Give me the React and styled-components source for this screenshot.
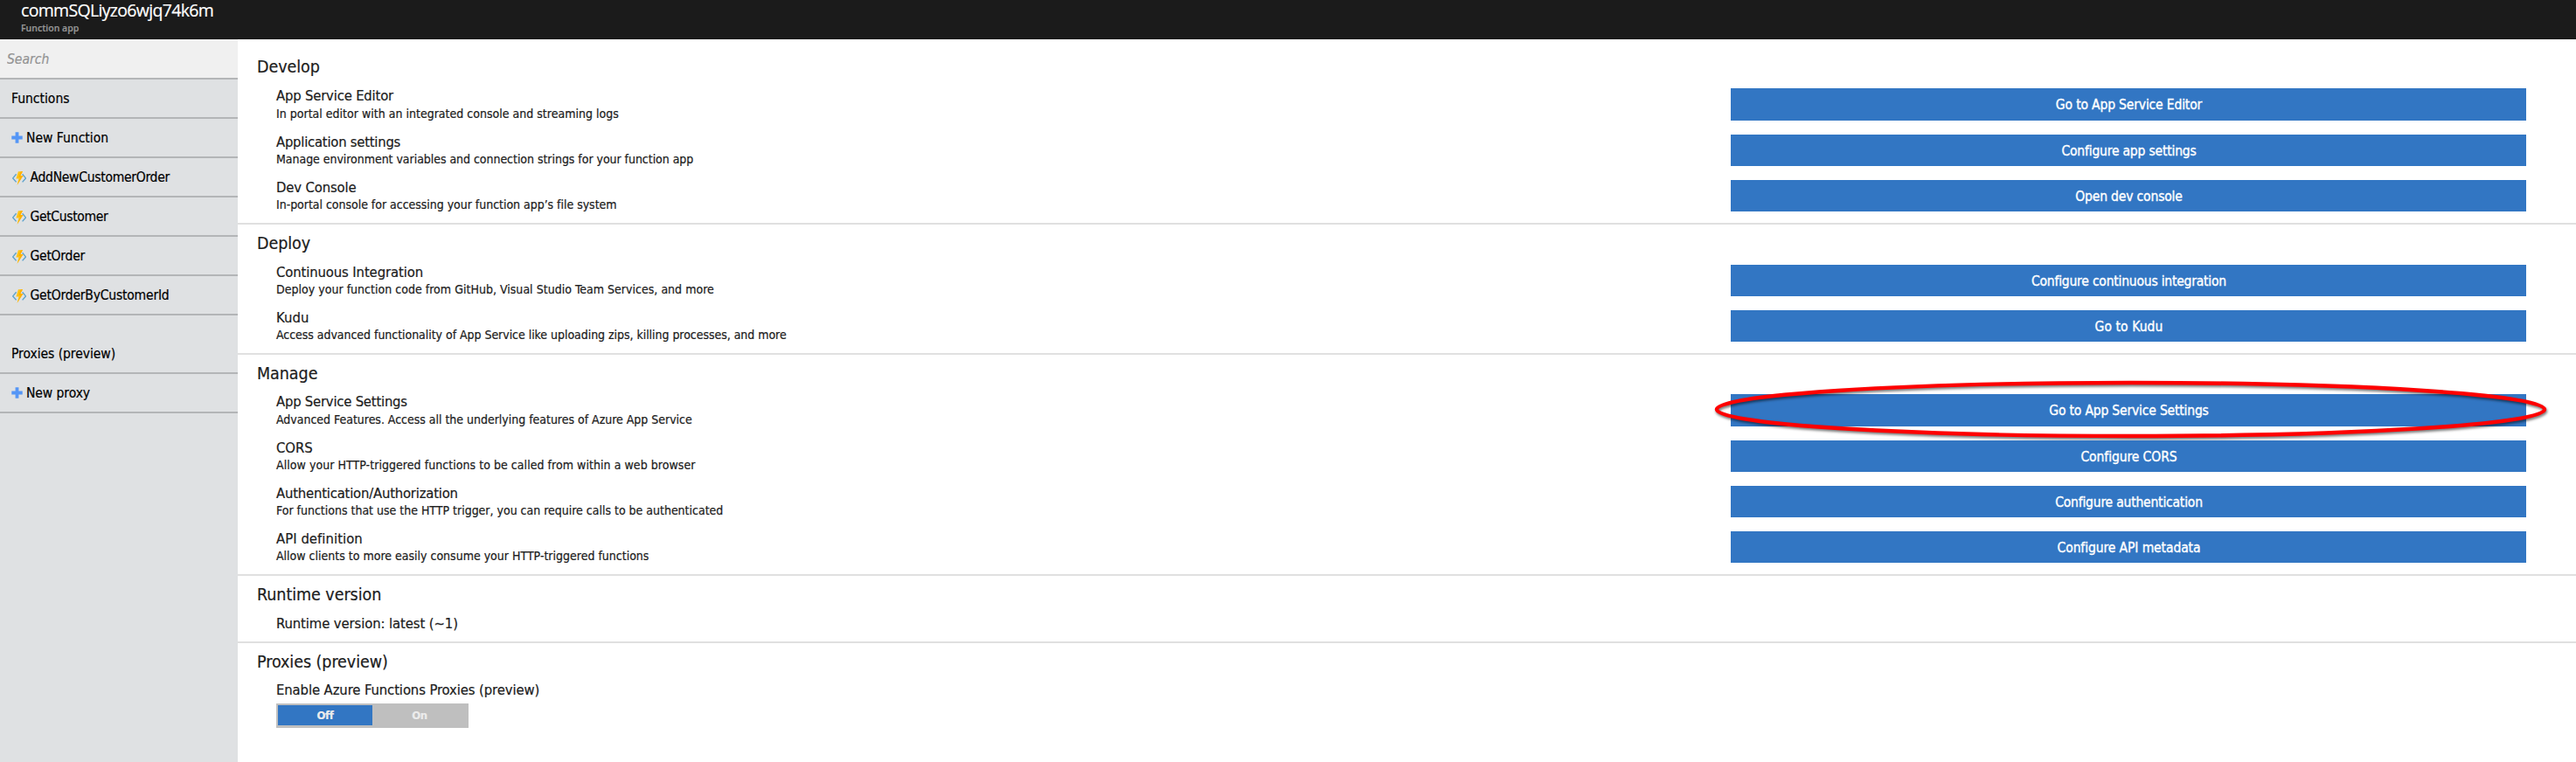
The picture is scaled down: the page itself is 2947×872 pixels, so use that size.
import React from 'react';
import styled, { createGlobalStyle } from 'styled-components';

const GlobalStyle = createGlobalStyle`
  * { box-sizing: border-box; }
  body {
    margin: 0;
    background: #fff;
    color: #202020;
    font-family: "DejaVu Sans Condensed", "DejaVu Sans", Tahoma, Verdana, sans-serif;
    -webkit-text-stroke: 0.2px currentColor;
  }
  button, input { font-family: inherit; border: 0; border-radius: 0; margin: 0; }
`;

const Page = styled.div`
  display: flex;
  flex-direction: column;
  height: 872px;
  overflow: hidden;
`;

const Header = styled.header`
  flex: none;
  height: 45px;
  padding-left: 24px;
  background: #1b1b1b;
  font-family: "Open Sans", "Noto Sans", sans-serif;
`;

const AppName = styled.div`
  font-size: 19.5px;
  line-height: 23px;
  letter-spacing: -0.68px;
  color: #fff;
`;

const AppKind = styled.div`
  margin-top: 2px;
  font-size: 10.5px;
  font-weight: 600;
  line-height: 14px;
  color: #969696;
`;

const Body = styled.div`
  display: flex;
  flex: 1;
  min-height: 0;
`;

const Sidebar = styled.nav`
  flex: none;
  width: 272px;
  background: #dfe1e3;
  font-size: 15.5px;
  line-height: 18px;
  color: #000;
`;

const SearchBox = styled.input`
  display: block;
  width: 100%;
  height: 46px;
  padding: 1px 8px 0;
  border-bottom: 2px solid #b3b5b7;
  background: #f0f0f0;
  font-size: 15.5px;
  outline: 0;
  &::placeholder {
    color: #949494;
    font-style: italic;
    opacity: 1;
    -webkit-text-stroke: 0.2px #949494;
  }
`;

const NavItem = styled.div`
  display: flex;
  align-items: flex-start;
  height: 45px;
  margin-top: ${(p) => (p.$gap ? 22 : 0)}px;
  padding: 13px 12px 0 13px;
  border-bottom: 2px solid #b3b5b7;
  letter-spacing: ${(p) => p.$track || 0}px;
  white-space: nowrap;
`;

const NavIcon = styled.svg`
  flex: none;
  display: block;
  margin: 2px ${(p) => p.$after}px 0 ${(p) => p.$before}px;
`;

const Main = styled.main`
  flex: 1;
  min-width: 0;
  padding-top: 10px;
`;

const Section = styled.section`
  padding: 10px 57px ${(p) => (p.$short ? 12 : 13)}px 22px;
  border-bottom: ${(p) => (p.$last ? 0 : 2)}px solid #e0e0e0;
`;

const SectionTitle = styled.h2`
  height: ${(p) => (p.$tight ? 35 : 36)}px;
  margin: 0;
  font-size: 19.5px;
  font-weight: 400;
  line-height: 23px;
  letter-spacing: -0.05px;
`;

const Rows = styled.div`
  display: flex;
  flex-direction: column;
  gap: 16px;
  padding-left: 22px;
`;

const Row = styled.div`
  display: flex;
  justify-content: space-between;
  height: ${(p) => (p.$tall ? 37 : 36)}px;
`;

const Feature = styled.div`
  display: flex;
  flex-direction: column;
  gap: ${(p) => (p.$tall ? 4 : 3)}px;
`;

const FeatureName = styled.div`
  font-size: 16.5px;
  line-height: 17px;
  letter-spacing: ${(p) => p.$track || 0}px;
  white-space: nowrap;
`;

const FeatureText = styled.div`
  font-size: 14px;
  line-height: 16px;
  letter-spacing: ${(p) => p.$track || 0}px;
  white-space: nowrap;
`;

const ActionCell = styled.div`
  position: relative;
  flex: none;
  width: 910px;
`;

const ActionButton = styled.button`
  display: flex;
  align-items: flex-start;
  justify-content: center;
  width: 100%;
  height: 100%;
  padding: 10px 0 0 1px;
  background: #3276c3;
  color: #fff;
  font-size: 15.5px;
  line-height: 18px;
  letter-spacing: ${(p) => p.$track || 0}px;
  -webkit-text-stroke: 0.35px #fff;
`;

const Marker = styled.svg`
  position: absolute;
  left: -24px;
  top: -21px;
  overflow: visible;
  pointer-events: none;
  filter: drop-shadow(1.5px 2.5px 1.5px rgba(0, 0, 0, 0.55));
`;

const Toggle = styled.div`
  display: flex;
  width: 220px;
  height: 28px;
  margin-top: 7px;
  padding: 2px 2px 3px;
  background: #bfbfbf;
`;

const ToggleOption = styled.button`
  flex: 1;
  padding: 0;
  background: ${(p) => (p.$on ? '#3276c3' : 'transparent')};
  color: #ececec;
  font-size: 13px;
  font-weight: 700;
  line-height: 18px;
  letter-spacing: -0.3px;
`;

const PlusIcon = () => (
  <NavIcon width="13" height="13" viewBox="0 0 13 13" $before={0} $after={4}>
    <path d="M6.5 .3v12.4M.3 6.5h12.4" stroke="#5596f6" strokeWidth="3.8" />
  </NavIcon>
);

const BoltIcon = () => (
  <NavIcon width="16" height="16" viewBox="0 0 16 16" $before={1} $after={4.5}>
    <path d="M4.6 3.2L.7 7.9l3.9 4.5M11.6 3.2l3.9 4.7-3.9 4.5" fill="none" stroke="#5ea3cc" strokeWidth="1.4" />
    <path d="M6.9.2H12L9.3 5h3.2L5.6 15.8 7.4 8.6H4.4z" fill="#fcc419" />
    <path d="M12 .2L9.3 5h3.2L5.6 15.8 9.2 7H7.1L9.6.2z" fill="#ffb000" />
  </NavIcon>
);

const NAV = [
  { label: 'Functions' },
  { label: 'New Function', icon: PlusIcon },
  { label: 'AddNewCustomerOrder', icon: BoltIcon, track: -0.28 },
  { label: 'GetCustomer', icon: BoltIcon, track: -0.34 },
  { label: 'GetOrder', icon: BoltIcon, track: -0.25 },
  { label: 'GetOrderByCustomerId', icon: BoltIcon, track: -0.2 },
  { label: 'Proxies (preview)', gap: true, track: -0.04 },
  { label: 'New proxy', icon: PlusIcon, track: -0.07 },
];

const SECTIONS = [
  {
    title: 'Develop',
    rows: [
      { name: 'App Service Editor', nt: -0.18, text: 'In portal editor with an integrated console and streaming logs', tt: 0.01, action: 'Go to App Service Editor', at: -0.16, tall: true },
      { name: 'Application settings', nt: -0.24, text: 'Manage environment variables and connection strings for your function app', tt: -0.04, action: 'Configure app settings', at: -0.19 },
      { name: 'Dev Console', nt: -0.14, text: 'In-portal console for accessing your function app’s file system', tt: -0.03, action: 'Open dev console', at: -0.16 },
    ],
  },
  {
    title: 'Deploy',
    rows: [
      { name: 'Continuous Integration', nt: -0.11, text: 'Deploy your function code from GitHub, Visual Studio Team Services, and more', tt: 0.02, action: 'Configure continuous integration', at: -0.21 },
      { name: 'Kudu', nt: 0.1, text: 'Access advanced functionality of App Service like uploading zips, killing processes, and more', tt: -0.04, action: 'Go to Kudu', at: 0.07 },
    ],
  },
  {
    title: 'Manage',
    tight: true,
    rows: [
      { name: 'App Service Settings', nt: -0.22, text: 'Advanced Features. Access all the underlying features of Azure App Service', tt: -0.02, action: 'Go to App Service Settings', at: -0.18, tall: true, marked: true },
      { name: 'CORS', nt: 0, text: 'Allow your HTTP-triggered functions to be called from within a web browser', tt: 0.05, action: 'Configure CORS', at: -0.08 },
      { name: 'Authentication/Authorization', nt: -0.2, text: 'For functions that use the HTTP trigger, you can require calls to be authenticated', tt: -0.01, action: 'Configure authentication', at: -0.2 },
      { name: 'API definition', nt: 0.05, text: 'Allow clients to more easily consume your HTTP-triggered functions', tt: 0, action: 'Configure API metadata', at: -0.1 },
    ],
  },
];

const FeatureRow = ({ row }) => (
  <Row $tall={row.tall}>
    <Feature $tall={row.tall}>
      <FeatureName $track={row.nt}>{row.name}</FeatureName>
      <FeatureText $track={row.tt}>{row.text}</FeatureText>
    </Feature>
    <ActionCell>
      <ActionButton $track={row.at}>{row.action}</ActionButton>
      {row.marked && (
        <Marker width="963" height="78">
          <ellipse cx="481.5" cy="38.5" rx="473.5" ry="30.5" fill="none" stroke="#ff0000" strokeWidth="4.4" />
        </Marker>
      )}
    </ActionCell>
  </Row>
);

export default function App() {
  return (
    <Page>
      <GlobalStyle />
      <Header>
        <AppName>commSQLiyzo6wjq74k6m</AppName>
        <AppKind>Function app</AppKind>
      </Header>
      <Body>
        <Sidebar>
          <SearchBox placeholder="Search" />
          {NAV.map(({ label, icon: Icon, track, gap }) => (
            <NavItem key={label} $track={track} $gap={gap}>
              {Icon && <Icon />}
              {label}
            </NavItem>
          ))}
        </Sidebar>
        <Main>
          {SECTIONS.map((s) => (
            <Section key={s.title}>
              <SectionTitle $tight={s.tight}>{s.title}</SectionTitle>
              <Rows>
                {s.rows.map((row) => (
                  <FeatureRow key={row.name} row={row} />
                ))}
              </Rows>
            </Section>
          ))}
          <Section $short>
            <SectionTitle>Runtime version</SectionTitle>
            <Rows>
              <FeatureName $track={-0.1}>Runtime version: latest (~1)</FeatureName>
            </Rows>
          </Section>
          <Section $last>
            <SectionTitle $tight>Proxies (preview)</SectionTitle>
            <Rows>
              <div>
                <FeatureName $track={-0.1}>Enable Azure Functions Proxies (preview)</FeatureName>
                <Toggle>
                  <ToggleOption $on>Off</ToggleOption>
                  <ToggleOption>On</ToggleOption>
                </Toggle>
              </div>
            </Rows>
          </Section>
        </Main>
      </Body>
    </Page>
  );
}
